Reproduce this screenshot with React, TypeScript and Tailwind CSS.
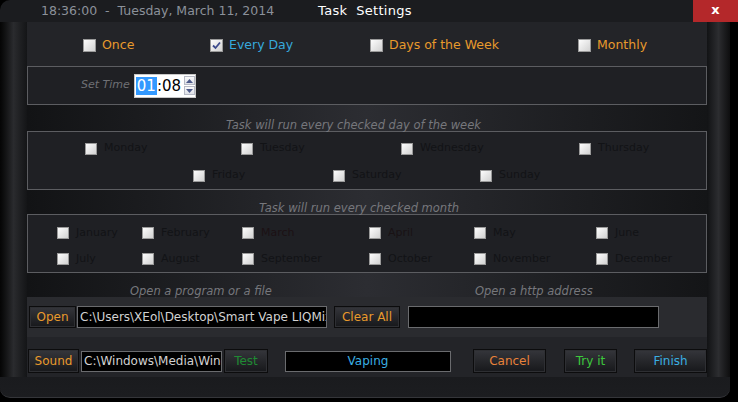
import React from 'react';

const FONT = "font-['DejaVu_Sans',Verdana,sans-serif]";

function Box({ checked = false, size = 12 }: { checked?: boolean; size?: number }) {
    return (
        <span
            className={`${size === 13 ? 'w-[13px] h-[13px]' : 'w-[12px] h-[12px]'} shrink-0 border border-[#9a9a9a] bg-linear-to-br from-[#fdfdfd] to-[#d2d2d2] flex items-center justify-center`}
        >
            {checked && (
                <svg width="9" height="9" viewBox="0 0 9 9">
                    <path d="M1 4.5 L3.5 7 L8 1.5" stroke="#3c4a8c" strokeWidth="1.8" fill="none" />
                </svg>
            )}
        </span>
    );
}

function Opt({ label, color, w, checked }: { label: string; color: string; w: string; checked?: boolean }) {
    return (
        <div className={`flex items-center gap-[6px] ${w}`}>
            <Box checked={checked} size={13} />
            <span className={`text-[12.5px] ${color}`}>{label}</span>
        </div>
    );
}

function Item({ label, w, color = 'text-[#121316]' }: { label: string; w: string; color?: string }) {
    return (
        <div className={`flex items-center gap-[7px] ${w}`}>
            <Box />
            <span className={`text-[11px] ${color}`}>{label}</span>
        </div>
    );
}

function Btn({ label, color, w, h = 'h-[22px]' }: { label: string; color: string; w: string; h?: string }) {
    return (
        <button
            type="button"
            className={`${w} ${h} shrink-0 flex items-center justify-center border border-[#0c0c0d] bg-linear-to-b from-[#35363b] via-[#26272b] to-[#17181b] shadow-[inset_0_0_0_1px_#2e2f33] text-[12px] ${color}`}
        >
            {label}
        </button>
    );
}

function Band({ h, children }: { h: string; children: React.ReactNode }) {
    return (
        <div className={`${h} flex items-end bg-linear-to-r from-[#121315] via-[#2c2d32] to-[#141517]`}>
            <div className="w-full flex text-[11.5px] italic text-[#76777c] leading-[14px]">{children}</div>
        </div>
    );
}

export default function App() {
    return (
        <div className={`w-[738px] h-[402px] bg-black flex flex-col overflow-hidden ${FONT}`}>
            {/* title bar */}
            <div className="h-[22px] flex shrink-0">
                <div className="w-[693px] bg-[#1b1c1f] rounded-tl-[10px] flex items-center">
                    <span className="ml-[41px] text-[12.5px] text-[#8b919a] whitespace-pre">18:36:00  -  Tuesday, March 11, 2014</span>
                    <span className="ml-[44px] text-[13px] text-white whitespace-pre tracking-[0.3px]">Task  Settings</span>
                </div>
                <div className="w-[45px] bg-[#b4282a] flex items-center justify-center text-white font-bold text-[13px] pb-[2px]">x</div>
            </div>

            {/* body */}
            <div className="flex h-[355px] shrink-0">
                <div className="w-[27px] bg-linear-to-r from-[#050505] via-[#2a2b2e] to-[#141517]" />
                <div className="w-[680px] bg-[#232428] flex flex-col">
                    {/* schedule type */}
                    <div className="h-[44px] flex items-center pl-[56px] pt-[3px]">
                        <Opt label="Once" color="text-[#e89a2c]" w="w-[127px]" />
                        <Opt label="Every Day" color="text-[#37a9dc]" w="w-[160px]" checked />
                        <Opt label="Days of the Week" color="text-[#e89a2c]" w="w-[208px]" />
                        <Opt label="Monthly" color="text-[#e89a2c]" w="w-[110px]" />
                    </div>

                    {/* set time */}
                    <div className="h-[39px] border border-[#5c5d61] bg-[#1f2024] flex items-center">
                        <span className="ml-[53px] text-[11px] italic text-[#6f7075]">Set Time</span>
                        <div className="ml-[4px] w-[62px] h-[24px] bg-white border border-[#c8c8c8] flex items-center pl-[1px]">
                            <span className="bg-[#3399ff] text-white text-[15px] leading-[18px] px-[1px]">01</span>
                            <span className="text-black text-[15px] leading-[18px]">:08</span>
                            <div className="ml-[3px] w-[15px] h-[19px] flex flex-col gap-[1px]">
                                <div className="flex-1 border border-[#b6b9c4] bg-linear-to-b from-[#fafafa] to-[#dfe1e8] flex items-center justify-center">
                                    <svg width="7" height="4" viewBox="0 0 7 4"><path d="M0 4 L3.5 0 L7 4 Z" fill="#4d5a8a" /></svg>
                                </div>
                                <div className="flex-1 border border-[#b6b9c4] bg-linear-to-b from-[#fafafa] to-[#dfe1e8] flex items-center justify-center">
                                    <svg width="7" height="4" viewBox="0 0 7 4"><path d="M0 0 L3.5 4 L7 0 Z" fill="#4d5a8a" /></svg>
                                </div>
                            </div>
                        </div>
                    </div>

                    <Band h="h-[26px]">
                        <span className="ml-[199px] translate-y-[1px]">Task will run every checked day of the week</span>
                    </Band>

                    {/* week days */}
                    <div className="h-[59px] border border-[#5c5d61] bg-[#1f2024] flex flex-col pt-[3px]">
                        <div className="h-[28px] flex items-center pl-[57px]">
                            <Item label="Monday" w="w-[156px]" />
                            <Item label="Tuesday" w="w-[160px]" />
                            <Item label="Wednesday" w="w-[178px]" />
                            <Item label="Thursday" w="w-[100px]" />
                        </div>
                        <div className="h-[28px] flex items-center pl-[165px]">
                            <Item label="Friday" w="w-[140px]" />
                            <Item label="Saturday" w="w-[147px]" />
                            <Item label="Sunday" w="w-[100px]" />
                        </div>
                    </div>

                    <Band h="h-[24px]">
                        <span className="ml-[232px] translate-y-[1px]">Task will run every checked month</span>
                    </Band>

                    {/* months */}
                    <div className="h-[59px] border border-[#5c5d61] bg-[#1f2024] flex flex-col pt-[5px]">
                        <div className="h-[26px] flex items-center pl-[29px]">
                            <Item label="January" w="w-[85px]" />
                            <Item label="February" w="w-[100px]" />
                            <Item label="March" w="w-[127px]" color="text-[#1c1114]" />
                            <Item label="April" w="w-[105px]" color="text-[#191214]" />
                            <Item label="May" w="w-[122px]" />
                            <Item label="June" w="w-[90px]" />
                        </div>
                        <div className="h-[26px] flex items-center pl-[29px]">
                            <Item label="July" w="w-[85px]" />
                            <Item label="August" w="w-[100px]" />
                            <Item label="September" w="w-[127px]" />
                            <Item label="October" w="w-[105px]" />
                            <Item label="November" w="w-[122px]" />
                            <Item label="December" w="w-[90px]" />
                        </div>
                    </div>

                    <Band h="h-[24px]">
                        <span className="ml-[103px] translate-y-[1px]">Open a program or a file</span>
                        <span className="ml-[203px] translate-y-[1px]">Open a http address</span>
                    </Band>

                    {/* open row */}
                    <div className="h-[40px] bg-[#2a2b2f] flex items-center pl-[2px]">
                        <Btn label="Open" color="text-[#e89a2c]" w="w-[47px]" />
                        <div className="ml-[1px] w-[250px] h-[22px] bg-black border border-[#6a6b6e] text-[12px] text-[#d2d2d2] leading-[20px] pl-[2px] overflow-hidden whitespace-nowrap">
                            C:\Users\XEol\Desktop\Smart Vape LIQMix
                        </div>
                        <Btn label="Clear All" color="text-[#e89a2c]" w="w-[66px] ml-[7px]" />
                        <div className="ml-[8px] w-[251px] h-[22px] bg-black border border-[#6a6b6e]" />
                    </div>

                    {/* bottom row */}
                    <div className="h-[40px] flex items-start pt-[12px] pl-[1px]">
                        <Btn label="Sound" color="text-[#e89a2c]" w="w-[51px]" h="h-[24px]" />
                        <div className="ml-[2px] mt-[2px] w-[141px] h-[21px] bg-black border border-[#6a6b6e] text-[12px] text-[#d2d2d2] leading-[19px] pl-[2px] overflow-hidden whitespace-nowrap">
                            C:\Windows\Media\Windows Notify.wav
                        </div>
                        <Btn label="Test" color="text-[#1f8a33]" w="w-[44px] ml-[2px]" h="h-[24px]" />
                        <div className="ml-[17px] mt-[2px] w-[166px] h-[21px] bg-black border border-[#6a6b6e] text-[12px] text-[#3aaee2] leading-[19px] text-center">
                            Vaping
                        </div>
                        <Btn label="Cancel" color="text-[#e8823a]" w="w-[73px] ml-[22px]" h="h-[24px]" />
                        <Btn label="Try it" color="text-[#3cc83c]" w="w-[53px] ml-[18px]" h="h-[24px]" />
                        <Btn label="Finish" color="text-[#3aaee2]" w="w-[73px] ml-[17px]" h="h-[24px]" />
                    </div>
                </div>
                <div className="w-[23px] bg-linear-to-r from-[#121315] via-[#2c2d30] to-[#0e0e0f]" />
                <div className="w-[8px] bg-black" />
            </div>

            {/* bottom frame */}
            <div className="h-[21px] w-[730px] bg-linear-to-b from-[#1a1b1e] to-[#1c1d20] rounded-b-[10px] border-b border-[#35363a]" />
        </div>
    );
}
